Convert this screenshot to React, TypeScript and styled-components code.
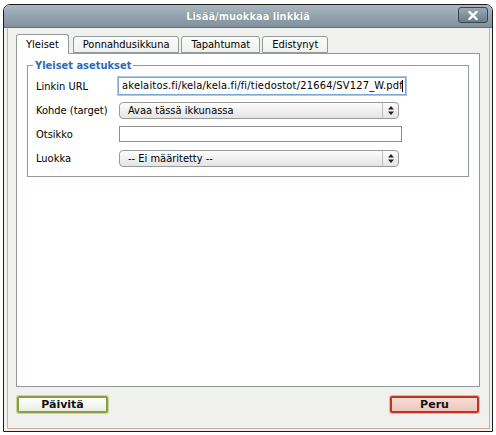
import React from "react";
import styled, { createGlobalStyle } from "styled-components";

const Global = createGlobalStyle`
  html, body { margin: 0; padding: 0; background: #ffffff; }
  body { font-family: "DejaVu Sans Condensed", "DejaVu Sans", Verdana, sans-serif; font-stretch: condensed; font-size: 11px; color: #000; }
`;

const Page = styled.div`
  width: 496px;
  height: 435px;
  padding: 4px 0 0 3px;
  box-sizing: border-box;
`;

const Window = styled.div`
  width: 490px;
  height: 428px;
  box-sizing: border-box;
  border: 1px solid #1c1c1c;
  border-radius: 7px 7px 0 0;
  background: #f0f0ee;
  display: flex;
  flex-direction: column;
  overflow: hidden;
`;

const TitleBar = styled.div`
  height: 22px;
  flex: none;
  position: relative;
  display: flex;
  align-items: center;
  justify-content: center;
  background: linear-gradient(#a9b7c1, #7f919d);
  border-bottom: 1px solid #5f6f7a;
  color: #fff;
  font-weight: bold;
  font-size: 11px;
  text-shadow: 0 0 1px #55636d;
`;

const CloseButton = styled.div`
  position: absolute;
  right: 4px;
  top: 2px;
  width: 30px;
  height: 16px;
  box-sizing: border-box;
  border: 1px solid #3a454d;
  border-radius: 3px;
  background: linear-gradient(#9aa9b3, #6c7d88);
  display: flex;
  align-items: center;
  justify-content: center;
`;

const Outer = styled.div`
  flex: 1;
  padding: 0 2px 2px 3px;
  display: flex;
`;

const Inner = styled.div`
  flex: 1;
  border: 1px solid #c3b0a2;
  border-top: none;
  padding: 6px 9px 15px 8px;
  display: flex;
  flex-direction: column;
`;

const Tabs = styled.div`
  display: flex;
  align-items: flex-end;
  gap: 2px;
  height: 19px;
  position: relative;
  z-index: 1;
`;

const Tab = styled.div<{ $active?: boolean }>`
  box-sizing: border-box;
  height: ${(p) => (p.$active ? "20px" : "17px")};
  margin-bottom: ${(p) => (p.$active ? "-1px" : "0")};
  padding: 0 9px;
  margin-right: ${(p) => (p.$active ? "2px" : "0")};
  display: flex;
  align-items: center;
  border: 1px solid #919b9c;
  border-bottom: ${(p) => (p.$active ? "none" : "1px solid #919b9c")};
  border-radius: 3px 3px 0 0;
  background: ${(p) => (p.$active ? "#ffffff" : "linear-gradient(#fbfbfa, #f0f0ec)")};
  font-size: 11px;
  color: #000;
`;

const Panel = styled.div`
  flex: 1;
  border: 1px solid #919b9c;
  background: #fff;
  padding: 5px 10px;
`;

const Fieldset = styled.fieldset`
  margin: 0;
  border: 1px solid #919b9c;
  padding: 2px 0 6px 8px;
`;

const Legend = styled.legend`
  color: #2b6cb8;
  font-weight: bold;
  font-size: 11px;
  padding: 0 2px;
  margin-left: -3px;
`;

const Row = styled.div`
  display: flex;
  align-items: center;
  height: 24px;
`;

const Label = styled.div`
  width: 82px;
  flex: none;
`;

const TextInput = styled.div<{ $focus?: boolean; $w: number }>`
  width: ${(p) => p.$w}px;
  height: ${(p) => (p.$focus ? 18 : 16)}px;
  box-sizing: border-box;
  border: 1px solid ${(p) => (p.$focus ? "#7aa7d6" : "#8d8d8d")};
  box-shadow: ${(p) => (p.$focus ? "0 0 0 1px #a9c8ea" : "none")};
  background: #fff;
  font-size: 11px;
  line-height: 16px;
  white-space: nowrap;
  overflow: hidden;
  display: flex;
  justify-content: flex-end;
  padding-right: 2px;
  margin-left: ${(p) => (p.$focus ? "0" : "1px")};
`;

const InputText = styled.span`
  flex: none;
  letter-spacing: 0.2px;
`;

const Caret = styled.span`
  display: inline-block;
  flex: none;
  width: 1px;
  height: 12px;
  background: #000;
  margin-top: 2px;
  margin-left: -1px;
`;

const Select = styled.div`
  width: 280px;
  height: 17px;
  margin-left: 1px;
  box-sizing: border-box;
  border: 1px solid #9a9a9a;
  border-radius: 4px;
  background: linear-gradient(#fdfdfd, #e4e4e4);
  display: flex;
  align-items: center;
  padding-left: 8px;
  font-size: 11px;
  position: relative;
`;

const SelectText = styled.span`
  flex: 1;
`;

const Arrows = styled.div`
  width: 15px;
  height: 100%;
  border-left: 1px solid #c0c0c0;
  display: flex;
  align-items: center;
  justify-content: center;
`;

const Footer = styled.div`
  display: flex;
  justify-content: space-between;
  margin-top: 9px;
  padding: 0 1px 0 1px;
`;

const Button = styled.div<{ $tone: "green" | "red" }>`
  width: ${(p) => (p.$tone === "green" ? "91px" : "89px")};
  height: 17px;
  box-sizing: border-box;
  border: 2px solid ${(p) => (p.$tone === "green" ? "#8aa03c" : "#c2341f")};
  border-radius: 2px;
  box-shadow: 0 0 0 1px ${(p) => (p.$tone === "green" ? "#c9d4a3" : "#e6b2a8")};
  background: ${(p) =>
    p.$tone === "green"
      ? "linear-gradient(#ffffff, #ecece4)"
      : "linear-gradient(#f8dcd6, #eec6be)"};
  display: flex;
  align-items: center;
  justify-content: center;
  font-weight: bold;
  font-size: 11px;
  font-family: "DejaVu Sans", Verdana, sans-serif;
  font-stretch: normal;
  color: #111;
`;

const Spacer = styled.div`
  flex: 1;
`;

const UpDown = () => (
  <svg width="6" height="9" viewBox="0 0 6 9">
    <path d="M0 3.5 L3 0 L6 3.5 Z M0 5.5 L3 9 L6 5.5 Z" fill="#222" />
  </svg>
);

export default function App() {
  return (
    <Page>
      <Global />
      <Window>
        <TitleBar>
          Lisää/muokkaa linkkiä
          <CloseButton>
            <svg width="10" height="9" viewBox="0 0 10 9">
              <path d="M1.5 1 L8.5 8 M8.5 1 L1.5 8" stroke="#fff" strokeWidth="2.4" strokeLinecap="square" />
            </svg>
          </CloseButton>
        </TitleBar>
        <Outer>
          <Inner>
            <Tabs>
              <Tab $active>Yleiset</Tab>
              <Tab>Ponnahdusikkuna</Tab>
              <Tab>Tapahtumat</Tab>
              <Tab>Edistynyt</Tab>
            </Tabs>
            <Panel>
              <Fieldset>
                <Legend>Yleiset asetukset</Legend>
                <Row>
                  <Label>Linkin URL</Label>
                  <TextInput $focus $w={288}>
                    <InputText>akelaitos.fi/kela/kela.fi/fi/tiedostot/21664/SV127_W.pdf</InputText>
                    <Caret />
                  </TextInput>
                </Row>
                <Row>
                  <Label>Kohde (target)</Label>
                  <Select>
                    <SelectText>Avaa tässä ikkunassa</SelectText>
                    <Arrows>
                      <UpDown />
                    </Arrows>
                  </Select>
                </Row>
                <Row>
                  <Label>Otsikko</Label>
                  <TextInput $w={283} />
                </Row>
                <Row>
                  <Label>Luokka</Label>
                  <Select>
                    <SelectText>-- Ei määritetty --</SelectText>
                    <Arrows>
                      <UpDown />
                    </Arrows>
                  </Select>
                </Row>
              </Fieldset>
              <Spacer />
            </Panel>
            <Footer>
              <Button $tone="green">Päivitä</Button>
              <Button $tone="red">Peru</Button>
            </Footer>
          </Inner>
        </Outer>
      </Window>
    </Page>
  );
}
